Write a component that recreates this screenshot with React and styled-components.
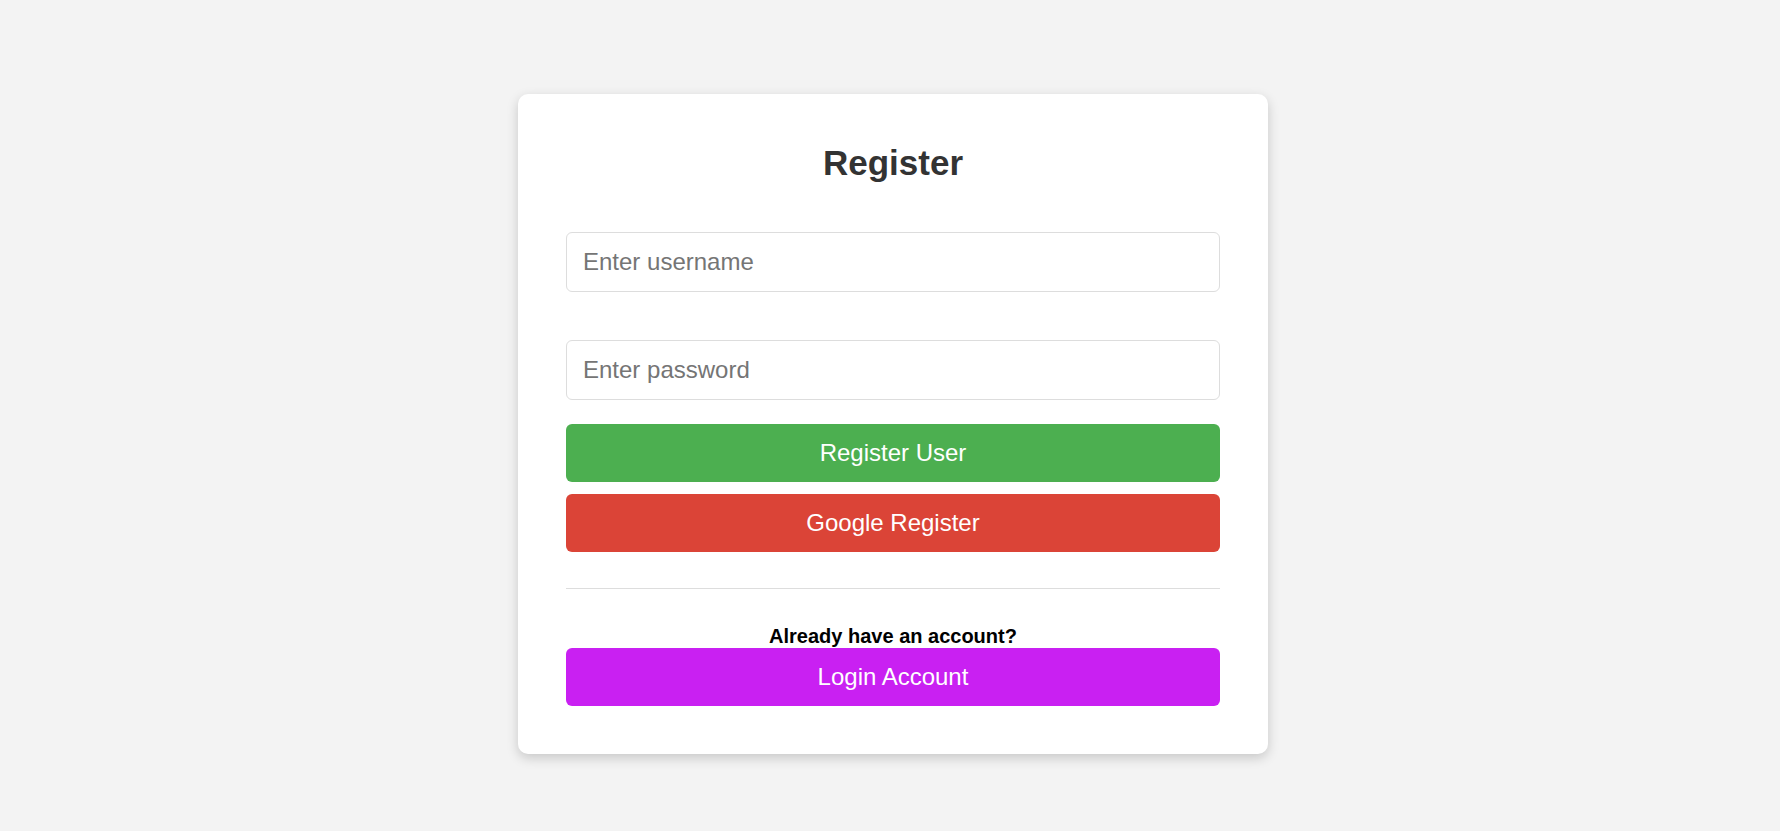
import React, { useState } from 'react';
import styled, { createGlobalStyle } from 'styled-components';

const GlobalStyle = createGlobalStyle`
  html, body {
    margin: 0;
    padding: 0;
    background: #f3f3f3;
    font-family: 'Liberation Sans', Arial, sans-serif;
  }
`;

const Page = styled.div`
  min-height: 100vh;
  display: flex;
  justify-content: center;
  align-items: flex-start;
  padding: 94px 0 0 6px;
  box-sizing: border-box;
`;

const Card = styled.form`
  width: 750px;
  box-sizing: border-box;
  padding: 47px 48px 48px;
  background: #fff;
  border-radius: 10px;
  box-shadow: 0 4px 12px rgba(0, 0, 0, 0.18);
  display: flex;
  flex-direction: column;
`;

const Title = styled.h2`
  margin: 2px 0 49px;
  text-align: center;
  font-size: 35px;
  font-weight: bold;
  color: #333;
`;

const Field = styled.input`
  display: block;
  width: 100%;
  box-sizing: border-box;
  padding: 15px 16px;
  font-family: inherit;
  font-size: 24px;
  border: 1px solid #ddd;
  border-radius: 6px;
  margin-bottom: ${(p) => p.$gap}px;
  outline: none;

  &::placeholder {
    color: #757575;
  }
`;

const ActionButton = styled.button`
  display: block;
  width: 100%;
  padding: 15px 0;
  border: none;
  border-radius: 6px;
  font-family: inherit;
  font-size: 24px;
  color: #fff;
  background: ${(p) => p.$bg};
  margin-bottom: ${(p) => p.$gap || 0}px;
  cursor: pointer;
`;

const Divider = styled.hr`
  border: none;
  border-top: 1px solid #ddd;
  margin: 0 0 36px;
  width: 100%;
`;

const Prompt = styled.p`
  margin: 0;
  text-align: center;
  font-size: 20px;
  font-weight: bold;
  color: #000;
`;

const App = () => {
  const [username, setUsername] = useState('');
  const [password, setPassword] = useState('');

  return (
    <>
      <GlobalStyle />
      <Page>
        <Card onSubmit={(e) => e.preventDefault()}>
          <Title>Register</Title>
          <Field
            $gap={48}
            placeholder="Enter username"
            value={username}
            onChange={(e) => setUsername(e.target.value)}
          />
          <Field
            $gap={24}
            type="password"
            placeholder="Enter password"
            value={password}
            onChange={(e) => setPassword(e.target.value)}
          />
          <ActionButton $bg="#4caf50" $gap={12}>Register User</ActionButton>
          <ActionButton type="button" $bg="#db4437" $gap={36}>Google Register</ActionButton>
          <Divider />
          <Prompt>Already have an account?</Prompt>
          <ActionButton type="button" $bg="#c920f2">Login Account</ActionButton>
        </Card>
      </Page>
    </>
  );
};

export default App;
